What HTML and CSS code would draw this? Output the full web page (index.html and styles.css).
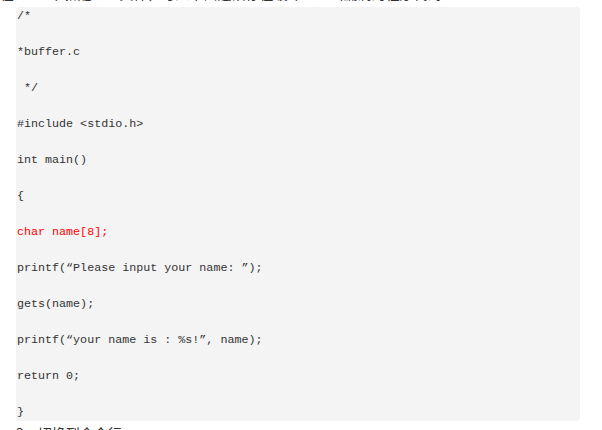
FILE: index.html
```html
<!DOCTYPE html>
<html>
<head>
<meta charset="utf-8">
<link rel="stylesheet" href="styles.css">
</head>
<body>
<p class="lead">在Linux下新建一个文件，写入下面这段存在缓冲区溢出漏洞的程序代码：</p>
<div class="code">
  <div class="ln">/*</div>
  <div class="ln">*buffer.c</div>
  <div class="ln">&nbsp;*/</div>
  <div class="ln">#include &lt;stdio.h&gt;</div>
  <div class="ln">int main()</div>
  <div class="ln">{</div>
  <div class="ln red">char name[8];</div>
  <div class="ln">printf(“Please input your name: ”);</div>
  <div class="ln">gets(name);</div>
  <div class="ln">printf(“your name is : %s!”, name);</div>
  <div class="ln">return 0;</div>
  <div class="ln">}</div>
</div>
<p class="next">3、切换到命令行</p>
</body>
</html>
```
FILE: styles.css
```css
html, body {
  margin: 0;
  padding: 0;
  background: #ffffff;
}
body {
  font-family: "Noto Sans CJK SC", "Liberation Sans", sans-serif;
  color: #333333;
  overflow: hidden;
}
.lead {
  margin: -17px 0 0 0;
  font-size: 14px;
  line-height: 20px;
  white-space: nowrap;
}
.code {
  margin: 4px 22px 0 16px;
  background: #f4f4f4;
  border-radius: 4px;
  padding: 1px 0 1px 1px;
  display: flex;
  flex-direction: column;
  gap: 20px;
  font-family: "Liberation Mono", "Courier New", monospace;
  font-size: 11.7px;
  color: #333333;
}
.ln {
  height: 16px;
  line-height: 16px;
  white-space: pre;
}
.red {
  color: #ff0000;
}
.next {
  margin: 2px 0 0 16px;
  font-size: 14px;
  line-height: 20px;
}
```
